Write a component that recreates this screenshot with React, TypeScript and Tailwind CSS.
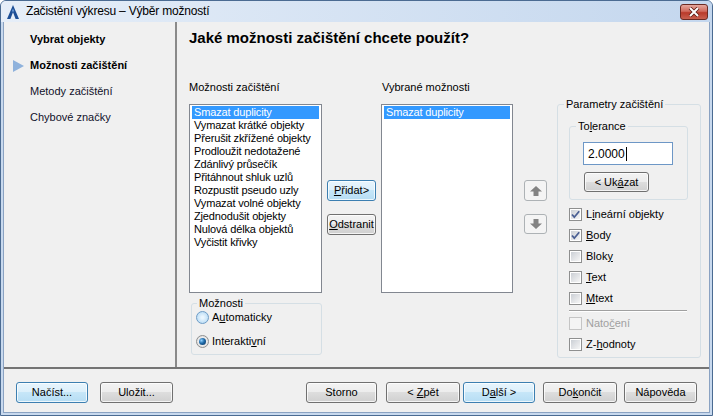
import React from "react";

const navItems = [
  { label: "Vybrat objekty", bold: true, active: false },
  { label: "Možnosti začištění", bold: true, active: true },
  { label: "Metody začištění", bold: false, active: false },
  { label: "Chybové značky", bold: false, active: false },
];

const cleanupOptions = [
  "Smazat duplicity",
  "Vymazat krátké objekty",
  "Přerušit zkřížené objekty",
  "Prodloužit nedotažené",
  "Zdánlivý průsečík",
  "Přitáhnout shluk uzlů",
  "Rozpustit pseudo uzly",
  "Vymazat volné objekty",
  "Zjednodušit objekty",
  "Nulová délka objektů",
  "Vyčistit křivky",
];

const Btn: React.FC<{ className?: string; blue?: boolean; children: React.ReactNode }> = ({
  className = "",
  blue,
  children,
}) => (
  <div
    className={`flex items-center justify-center whitespace-pre rounded-[3px] border text-[11px] leading-none text-black shadow-[inset_0_0_0_1px_rgba(255,255,255,0.75)] ${
      blue
        ? "border-[#3c7fb1] bg-[linear-gradient(#e8f5fd_0%,#dbeffb_50%,#c6e6f8_50%,#b6ddf4_100%)]"
        : "border-[#707070] bg-[linear-gradient(#f3f3f3_0%,#ececec_50%,#dddddd_50%,#d0d0d0_100%)]"
    } ${className}`}
  >
    {children}
  </div>
);

const Check: React.FC<{ checked?: boolean; disabled?: boolean; children: React.ReactNode }> = ({
  checked,
  disabled,
  children,
}) => (
  <div className="flex h-[13px] items-center gap-[4px] leading-[13px]">
    <div
      className={`flex h-[13px] w-[13px] items-center justify-center border ${
        disabled ? "border-[#c5c5c5] bg-[#f4f4f4]" : "border-[#8e8f8f] bg-white"
      }`}
    >
      <div
        className={`relative h-[9px] w-[9px] ${
          disabled ? "bg-[#f4f4f4]" : "bg-[linear-gradient(135deg,#cbcfd5,#f6f6f6)]"
        }`}
      >
        {checked && (
          <svg width="11" height="11" viewBox="0 0 11 11" className="absolute -left-[1px] -top-[1px]">
            <path d="M2 5.5 L4.3 8.2 L9.2 2.2" fill="none" stroke="#4a5f93" strokeWidth="1.8" />
          </svg>
        )}
      </div>
    </div>
    <span className={disabled ? "text-[#a0a0a0]" : "text-black"}>{children}</span>
  </div>
);

const Radio: React.FC<{ checked?: boolean; hot?: boolean; children: React.ReactNode }> = ({
  checked,
  hot,
  children,
}) => (
  <div className="flex h-[13px] items-center gap-[3px] leading-[13px]">
    <div
      className={`flex h-[13px] w-[13px] items-center justify-center rounded-full border ${
        hot
          ? "border-[#6e9cc6] bg-[radial-gradient(circle,#eaf6fe_15%,#b9dcf5_80%)]"
          : "border-[#8e8f8f] bg-[radial-gradient(circle,#f7f7f7_30%,#d8d8d8_90%)]"
      }`}
    >
      {checked && (
        <div className="h-[7px] w-[7px] rounded-full bg-[radial-gradient(circle_at_35%_35%,#8fd0ff_0%,#1e6aa8_45%,#0b2f57_100%)]" />
      )}
    </div>
    <span>{children}</span>
  </div>
);

const ListBox: React.FC<{ items: string[]; className: string }> = ({ items, className }) => (
  <div className={`mt-[10px] h-[189px] border border-[#828790] bg-white px-[2px] pt-[1px] ${className}`}>
    {items.map((t, i) => (
      <div
        key={t}
        className={`h-[13px] whitespace-nowrap pl-[2px] leading-[13px] tracking-[-0.15px] ${
          i === 0 ? "bg-[#3399ff] text-white" : "text-black"
        }`}
      >
        {t}
      </div>
    ))}
  </div>
);

const ArrowBtn: React.FC<{ down?: boolean; className: string }> = ({ down, className }) => (
  <div
    className={`flex w-[23px] items-center justify-center rounded-[3px] border border-[#adb2b5] bg-[#f4f4f4] ${className}`}
  >
    <svg width="12" height="10" viewBox="0 0 12 10" className={down ? "rotate-180" : ""}>
      <polygon points="6,0 12,5.5 8.5,5.5 8.5,10 3.5,10 3.5,5.5 0,5.5" fill="#838383" />
    </svg>
  </div>
);

export default function App() {
  return (
    <div className="h-[416px] w-[713px] bg-white font-['Liberation_Sans',Arial,sans-serif] text-[11px] text-black">
      <div className="flex h-full flex-col rounded-t-[6px] border border-[#4b6b92] bg-[#c8d9ee]">
        {/* title bar */}
        <div className="flex h-[21px] items-start rounded-t-[5px] bg-[linear-gradient(to_right,#e6eef8,#c4d7ee)]">
          <svg width="12" height="14" viewBox="0 0 12 14" className="ml-[6px] mt-[4px]">
            <path d="M6 0 L12 14 L8.6 14 L6 7.2 L3.4 14 L0 14 Z" fill="#1d4f96" />
            <path d="M6 3.5 L7.2 6.5 L4.8 6.5 Z" fill="#6fa0db" />
          </svg>
          <span className="ml-[7px] mt-[3px] text-[12px] leading-[15px] tracking-[-0.2px] text-black">
            Začistění výkresu – Výběr možností
          </span>
          <div className="ml-auto mr-[4px] mt-[3px] flex h-[16px] w-[28px] items-center justify-center rounded-[3px] border border-[#6b2a22] bg-[linear-gradient(#e6a89e_0%,#d0695b_45%,#b93a2a_55%,#c9604f_100%)]">
            <svg width="12" height="10" viewBox="0 0 12 10">
              <path d="M2 1 L10 9 M10 1 L2 9" stroke="#5a1a12" strokeWidth="3.6" />
              <path d="M2 1 L10 9 M10 1 L2 9" stroke="#ffffff" strokeWidth="2" />
            </svg>
          </div>
        </div>

        {/* client area */}
        <div className="mx-[2px] mb-[2px] flex flex-1 flex-col border border-t-0 border-[#8aa2c2] bg-[#f0f0f0]">
          <div className="flex h-[345px]">
            {/* wizard steps */}
            <div className="w-[171px] pt-[11px]">
              {navItems.map((n) => (
                <div key={n.label} className="mb-[13px] flex h-[13px] items-center leading-[13px]">
                  <div className="w-[26px] pl-[9px]">
                    {n.active && (
                      <svg width="11" height="12" viewBox="0 0 11 12">
                        <polygon points="0,0 11,6 0,12" fill="#8fb2dc" />
                      </svg>
                    )}
                  </div>
                  <span className={n.bold ? "font-bold text-black" : "text-[#10102a]"}>{n.label}</span>
                </div>
              ))}
            </div>
            <div className="w-[2px] bg-[#8a8a8a]" />

            {/* page */}
            <div className="flex-1 pl-[12px] pt-[7px]">
              <h1 className="text-[15px] font-bold leading-[17px]">Jaké možnosti začištění chcete použít?</h1>
              <div className="mt-[35px] flex items-start">
                <div className="w-[133px]">
                  <div className="h-[13px] leading-[13px]">Možnosti začištění</div>
                  <ListBox items={cleanupOptions} className="w-[133px]" />
                  <fieldset className="ml-[2px] mt-[4px] w-[131px] rounded-[3px] border border-[#d5dfe5] p-0 pb-[6px]">
                    <legend className="ml-[5px] px-[2px] leading-[13px]">Možnosti</legend>
                    <div className="pl-[4px]">
                      <div className="mt-[1px]">
                        <Radio hot>
                          A<u>u</u>tomaticky
                        </Radio>
                      </div>
                      <div className="mt-[11px]">
                        <Radio checked>
                          Interakti<u>v</u>ní
                        </Radio>
                      </div>
                    </div>
                  </fieldset>
                </div>

                <div className="ml-[5px] w-[49px] pt-[99px]">
                  <Btn blue className="h-[21px] w-[49px]">
                    <u>P</u>řidat&gt;
                  </Btn>
                  <Btn className="mt-[13px] h-[21px] w-[49px]">
                    <u>O</u>dstranit
                  </Btn>
                </div>

                <div className="ml-[5px] w-[132px]">
                  <div className="h-[13px] pl-[1px] leading-[13px]">Vybrané možnosti</div>
                  <ListBox items={["Smazat duplicity"]} className="w-[132px]" />
                </div>

                <div className="ml-[11px] w-[23px] pt-[99px]">
                  <ArrowBtn className="h-[21px]" />
                  <ArrowBtn down className="mt-[13px] h-[20px]" />
                </div>

                <fieldset className="ml-[10px] mt-[17px] w-[144px] rounded-[3px] border border-[#d5dfe5] p-0">
                  <legend className="ml-[6px] px-[2px] leading-[13px]">Parametry začištění</legend>
                  <div className="px-[11px] pb-[6px]">
                    <fieldset className="mt-[9px] w-[119px] rounded-[3px] border border-[#d5dfe5] p-0">
                      <legend className="ml-[6px] px-[2px] leading-[13px]">
                        To<u>l</u>erance
                      </legend>
                      <div className="pb-[7px] pl-[13px]">
                        <div className="mt-[9px] flex h-[23px] w-[90px] items-center border border-[#6d97c6] bg-white pl-[4px] text-[12px]">
                          2.0000
                          <span className="ml-[1px] h-[14px] w-px bg-black" />
                        </div>
                        <Btn className="ml-[1px] mt-[7px] h-[20px] w-[65px]">
                          {"< Uk"}
                          <u>á</u>zat
                        </Btn>
                      </div>
                    </fieldset>
                    <div className="mt-[8px] flex flex-col gap-[8px]">
                      <Check checked>
                        L<u>i</u>neární objekty
                      </Check>
                      <Check checked>
                        <u>B</u>ody
                      </Check>
                      <Check>
                        Blok<u>y</u>
                      </Check>
                      <Check>
                        <u>T</u>ext
                      </Check>
                      <Check>
                        <u>M</u>text
                      </Check>
                    </div>
                    <div className="mt-[5px] h-[2px] w-[118px] border-t border-b border-t-[#a0a0a0] border-b-white" />
                    <div className="mt-[5px]">
                      <Check disabled>
                        Nato<u>č</u>ení
                      </Check>
                    </div>
                    <div className="mt-[8px]">
                      <Check>
                        Z-<u>h</u>odnoty
                      </Check>
                    </div>
                  </div>
                </fieldset>
              </div>
            </div>
          </div>

          <div className="h-[2px] bg-[#747474]" />

          {/* buttons */}
          <div className="flex items-start px-[12px] pt-[13px]">
            <Btn blue className="h-[21px] w-[72px]">
              Načíst...
            </Btn>
            <Btn className="ml-[12px] h-[21px] w-[73px]">Uložit...</Btn>
            <div className="flex-1" />
            <Btn className="h-[21px] w-[71px]">Storno</Btn>
            <Btn className="ml-[9px] h-[21px] w-[74px]">
              {"< "}
              <u>Z</u>pět
            </Btn>
            <Btn blue className="ml-[3px] h-[21px] w-[72px]">
              D<u>a</u>lší{" >"}
            </Btn>
            <Btn className="ml-[8px] h-[21px] w-[74px]">
              Do<u>k</u>ončit
            </Btn>
            <Btn className="ml-[7px] h-[21px] w-[73px]">Nápověda</Btn>
          </div>
        </div>
      </div>
    </div>
  );
}
